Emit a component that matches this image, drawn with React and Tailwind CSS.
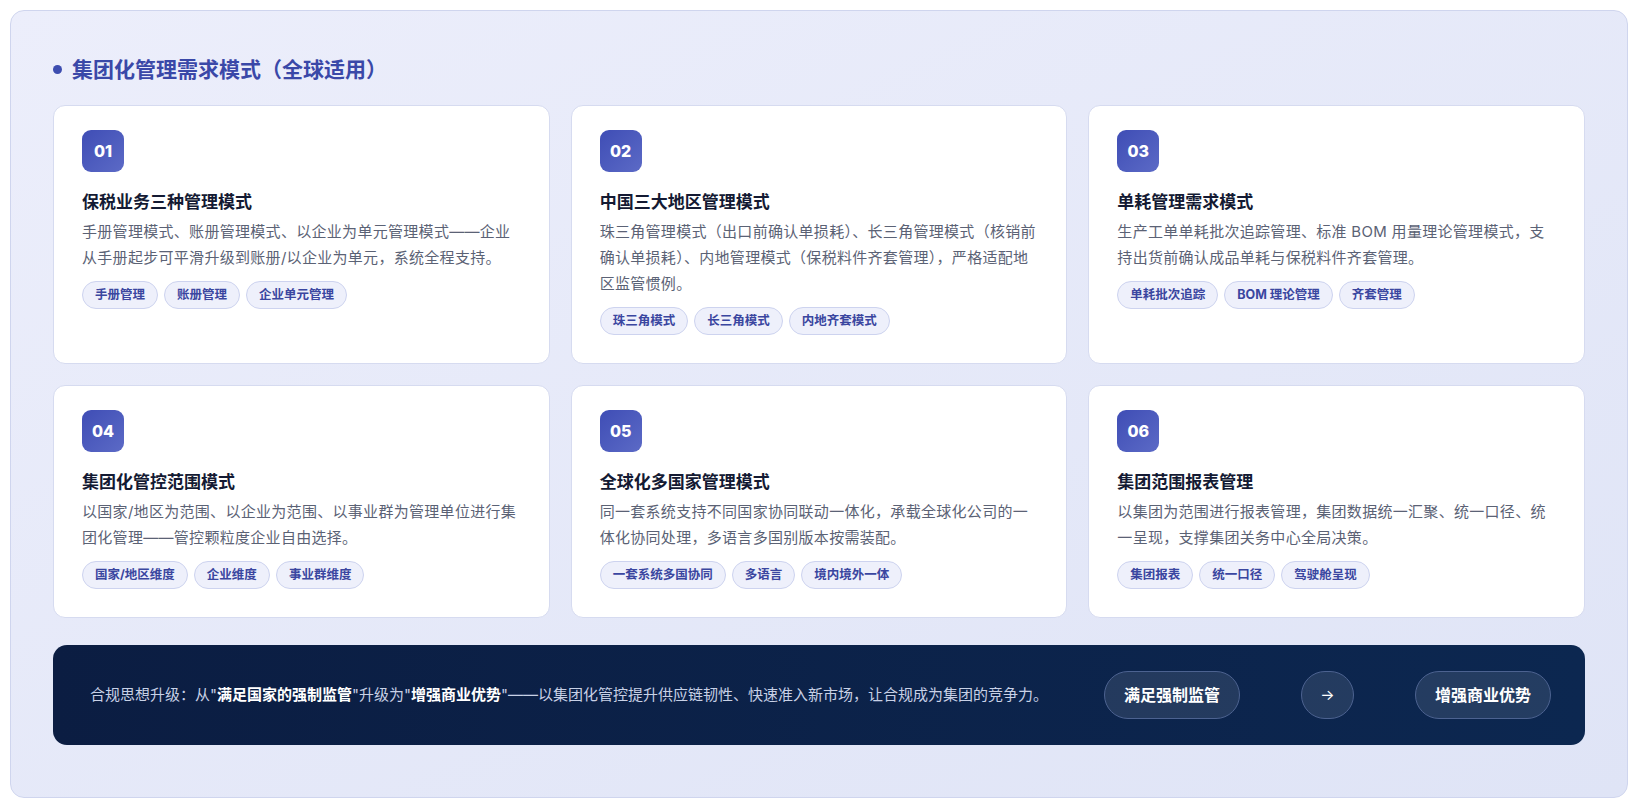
const cards = [
  { n: '01', t: '保税业务三种管理模式', d: '手册管理模式、账册管理模式、以企业为单元管理模式——企业从手册起步可平滑升级到账册/以企业为单元，系统全程支持。', tags: ['手册管理', '账册管理', '企业单元管理'] },
  { n: '02', t: '中国三大地区管理模式', d: '珠三角管理模式（出口前确认单损耗）、长三角管理模式（核销前确认单损耗）、内地管理模式（保税料件齐套管理），严格适配地区监管惯例。', tags: ['珠三角模式', '长三角模式', '内地齐套模式'] },
  { n: '03', t: '单耗管理需求模式', d: '生产工单单耗批次追踪管理、标准 BOM 用量理论管理模式，支持出货前确认成品单耗与保税料件齐套管理。', tags: ['单耗批次追踪', 'BOM 理论管理', '齐套管理'] },
  { n: '04', t: '集团化管控范围模式', d: '以国家/地区为范围、以企业为范围、以事业群为管理单位进行集团化管理——管控颗粒度企业自由选择。', tags: ['国家/地区维度', '企业维度', '事业群维度'] },
  { n: '05', t: '全球化多国家管理模式', d: '同一套系统支持不同国家协同联动一体化，承载全球化公司的一体化协同处理，多语言多国别版本按需装配。', tags: ['一套系统多国协同', '多语言', '境内境外一体'] },
  { n: '06', t: '集团范围报表管理', d: '以集团为范围进行报表管理，集团数据统一汇聚、统一口径、统一呈现，支撑集团关务中心全局决策。', tags: ['集团报表', '统一口径', '驾驶舱呈现'] },
];

export default function App() {
  return (
    <div className="w-[1638px] h-[808px] bg-white p-[10px]" style={{ fontFamily: 'Inter, "Noto Sans CJK SC", sans-serif' }}>
      <div className="h-[788px] rounded-[14px] border border-[#cfd5ee] bg-gradient-to-br from-[#eceefb] to-[#dfe4f6] px-[42px] pt-[44px]">
        <div className="flex items-center gap-[10px] h-[28px]">
          <div className="w-[9px] h-[9px] rounded-full bg-[#3d4db0]" />
          <h1 className="text-[21px] font-bold text-[#3a48a8] leading-none">集团化管理需求模式（全球适用）</h1>
        </div>
        <div className="grid grid-cols-3 gap-x-[21px] gap-y-[21px] mt-[22px]">
          {cards.map(c => (
            <div key={c.n} className="bg-white rounded-[12px] border border-[#d6dbf0] px-[28px] pb-[28px] pt-[24px]">
              <div className="w-[42px] h-[42px] rounded-[9px] bg-gradient-to-br from-[#3f4db5] to-[#5c6ac6] flex items-center justify-center text-white font-extrabold text-[16px]">{c.n}</div>
              <div className="mt-[18px] text-[17px] font-bold text-[#141a33] leading-[25px]">{c.t}</div>
              <div className="mt-[4px] text-[15px] text-[#5b6275] leading-[26px] tracking-[0.02em]">{c.d}</div>
              <div className="flex gap-[6px] mt-[10px]">
                {c.tags.map(t => (
                  <span key={t} className="h-[28px] px-[12px] flex items-center rounded-full bg-[#eef0fb] border border-[#cdd3ef] text-[12.5px] font-bold text-[#3a46a0]">{t}</span>
                ))}
              </div>
            </div>
          ))}
        </div>
        <div className="mt-[27px] h-[100px] rounded-[14px] bg-gradient-to-r from-[#0b1d42] to-[#0c2750] flex items-center pl-[37px] pr-[34px]">
          <p className="w-[960px] text-[15px] leading-[26px] text-[#c8d1e6]">合规思想升级：从"<b className="text-white">满足国家的强制监管</b>"升级为"<b className="text-white">增强商业优势</b>"——以集团化管控提升供应链韧性、快速准入新市场，让合规成为集团的竞争力。</p>
          <div className="ml-auto flex items-center gap-[61px]">
            <span className="h-[48px] px-[19px] rounded-full border border-[#4c6290] bg-white/10 text-white font-bold text-[16px] flex items-center">满足强制监管</span>
            <span className="h-[48px] w-[53px] rounded-full border border-[#4c6290] bg-white/10 text-white text-[15px] flex items-center justify-center">→</span>
            <span className="h-[48px] px-[19px] rounded-full border border-[#4c6290] bg-white/10 text-white font-bold text-[16px] flex items-center">增强商业优势</span>
          </div>
        </div>
      </div>
    </div>
  );
}
